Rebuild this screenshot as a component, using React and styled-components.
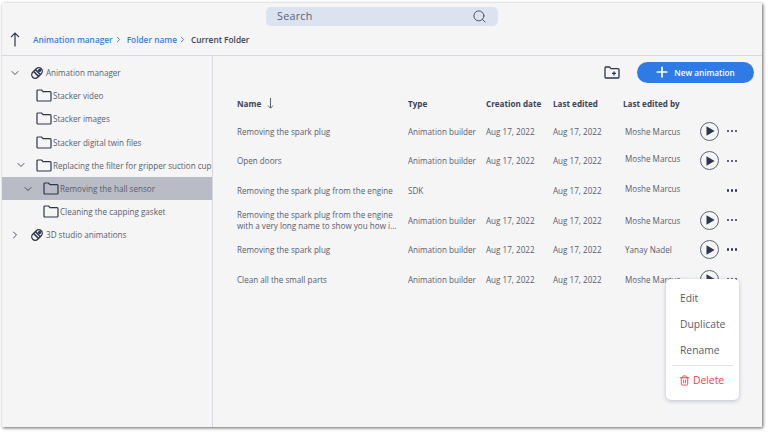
import React from 'react';
import styled, { createGlobalStyle } from 'styled-components';
import { Search as SearchIcon, ChevronDown, ChevronRight, Plus, Trash2 } from 'lucide-react';

const GlobalStyle = createGlobalStyle`
  html, body { margin: 0; padding: 0; background: #fff; }
  body { width: 768px; height: 432px; overflow: hidden; font-family: "Open Sans", "Noto Sans", sans-serif; }
  * { box-sizing: border-box; }
`;

const Page = styled.div`
  width: 768px;
  height: 432px;
  padding: 3px 6px 5px 2px;
`;

const Frame = styled.div`
  position: relative;
  width: 760px;
  height: 424px;
  display: flex;
  flex-direction: column;
  background: #f5f5f5;
  box-shadow: 1px 1px 3px rgba(60, 60, 60, 0.8);
`;

const Header = styled.header`
  height: 53px;
  flex: none;
  display: flex;
  flex-direction: column;
  border-bottom: 1px solid #d6d9e2;
  padding-top: 4px;
`;

const SearchBar = styled.div`
  width: 232px;
  height: 19px;
  margin-left: 264px;
  padding: 0 11px;
  display: flex;
  align-items: center;
  justify-content: space-between;
  background: #dbe2f0;
  border-radius: 5px;
  font-size: 10.7px;
  line-height: 17px;
  letter-spacing: 0.3px;
  color: #5a6278;
`;

const Crumbs = styled.nav`
  margin-top: 4px;
  height: 18px;
  padding-left: 8px;
  display: flex;
  align-items: center;
  font-size: 8.3px;
  font-weight: 600;
  color: #3a4256;
  svg { flex: none; }
`;

const CrumbLink = styled.span`
  color: #2f7fe8;
  display: flex;
  align-items: center;
  gap: 1px;
  margin-right: 4px;
`;

const CrumbList = styled.div`
  margin-left: 13px;
  display: flex;
  align-items: center;
`;

const Body = styled.div`
  flex: 1;
  display: flex;
  min-height: 0;
`;

const Sidebar = styled.aside`
  width: 211px;
  flex: none;
  padding-top: 5px;
  border-right: 1px solid #d6d9e2;
  overflow: hidden;
`;

const TreeRow = styled.div`
  height: 23.2px;
  display: flex;
  align-items: center;
  padding-left: ${(p) => p.$indent}px;
  background: ${(p) => (p.$active ? '#b9bcc5' : 'transparent')};
  font-size: 8.1px;
  white-space: nowrap;
  color: #565d70;
`;

const Toggle = styled.span`
  width: 12px;
  margin-right: 9px;
  flex: none;
  display: flex;
  align-items: center;
  justify-content: center;
  color: #2d3650;
`;

const TreeLabel = styled.span`
  margin-left: ${(p) => p.$gap}px;
`;

const Main = styled.main`
  flex: 1;
  min-width: 0;
  padding: 5px 8px 0 24px;
`;

const Toolbar = styled.div`
  height: 22px;
  display: flex;
  justify-content: flex-end;
  align-items: center;
  gap: 17px;
`;

const NewButton = styled.button`
  width: 117px;
  height: 21px;
  display: flex;
  align-items: center;
  justify-content: center;
  gap: 4px;
  border: 0;
  border-radius: 11px;
  background: #2f7be6;
  color: #fff;
  font-family: inherit;
  font-size: 8.2px;
  font-weight: 600;
  padding: 0 2px 0 0;
`;

const TableHead = styled.div`
  display: grid;
  grid-template-columns: 171px 78px 67px 70px 1fr;
  align-items: center;
  height: 24px;
  margin-top: 8px;
  font-size: 8.1px;
  font-weight: 700;
  color: #3b4358;
`;

const HeadCell = styled.span`
  display: flex;
  align-items: center;
  gap: 6px;
`;

const Rows = styled.div`
  margin-top: 1.5px;
`;

const Row = styled.div`
  display: grid;
  grid-template-columns: 171px 78px 67px 72px 75px 22px 20px;
  align-items: center;
  height: 29.6px;
  font-size: 8.1px;
  color: #565d70;
  white-space: nowrap;
`;

const NameCell = styled.span`
  line-height: 11.2px;
`;

const ByCell = styled.span`
  transform: translateY(${(p) => p.$shift}px);
`;

const PlayBtn = styled.span`
  width: 19px;
  height: 19px;
  border: 1.2px solid #5c6478;
  border-radius: 50%;
  display: flex;
  align-items: center;
  justify-content: center;
`;

const Dots = styled.span`
  display: flex;
  gap: 1.7px;
  justify-content: center;
  i {
    width: 2.4px;
    height: 2.4px;
    border-radius: 50%;
    background: #2d3650;
  }
`;

const Menu = styled.div`
  position: absolute;
  left: 664px;
  top: 276px;
  width: 73px;
  height: 121px;
  padding: 6px 6px 0;
  background: #fff;
  border-radius: 5px;
  box-shadow: 0 1px 4px rgba(110, 125, 170, 0.45);
  font-size: 10.3px;
  color: #565d70;
`;

const MenuItem = styled.div`
  height: 26px;
  padding-left: 8px;
  display: flex;
  align-items: center;
`;

const MenuDivider = styled.div`
  height: 1px;
  margin-top: 2px;
  background: #e2e4ea;
`;

const DeleteItem = styled(MenuItem)`
  margin-top: 1px;
  padding-left: 7px;
  gap: 3px;
  color: #fb3c48;
`;

const FolderIcon = () => (
  <svg width="16" height="13" viewBox="0 0 16 13" fill="none" stroke="#2d3650" strokeWidth="1.2" strokeLinejoin="round" style={{ flex: 'none' }}>
    <path d="M1 11V2q0-1 1-1h3.5l1.5 1.6h7q1 0 1 1V11q0 1-1 1H2q-1 0-1-1z" />
  </svg>
);

const RollIcon = () => (
  <svg width="14" height="14" viewBox="0 0 14 14" fill="none" stroke="#2d3650" strokeWidth="1.3" style={{ flex: 'none' }}>
    <rect x="1" y="3.5" width="12" height="7" rx="3.5" transform="rotate(-45 7 7)" />
    <path d="M3.4 5.2l5.4 5.4M5.2 3.4l5.4 5.4" strokeWidth="1.6" />
    <circle cx="9.6" cy="4.4" r="1.6" fill="#2d3650" stroke="none" />
  </svg>
);

const NewFolderIcon = () => (
  <svg width="16" height="13" viewBox="0 0 16 13" fill="none" stroke="#2d3650" strokeWidth="1.3" strokeLinejoin="round">
    <path d="M1 11V2q0-1 1-1h3.5l1.5 1.6h7q1 0 1 1V11q0 1-1 1H2q-1 0-1-1z" />
    <path d="M8 7.4h4M10 5.4v4" />
  </svg>
);

const PlayIcon = () => (
  <svg width="9" height="10" viewBox="0 0 9 10" style={{ marginLeft: 2 }}>
    <path d="M0.5 0.3L8.6 5L0.5 9.7z" fill="#2d3650" />
  </svg>
);

const UpArrow = () => (
  <svg width="10" height="15" viewBox="0 0 10 15" fill="none" stroke="#2d3650" strokeWidth="1.2">
    <path d="M5 14.5V1M1 5.2L5 1l4 4.2" />
  </svg>
);

const SortArrow = () => (
  <svg width="7" height="11" viewBox="0 0 7 11" fill="none" stroke="#4a5268" strokeWidth="0.9">
    <path d="M3.5 0v10M1 7.6l2.5 2.6L6 7.6" />
  </svg>
);

const tree = [
  { indent: 7, open: true, icon: 'roll', label: 'Animation manager' },
  { indent: 13, icon: 'folder', label: 'Stacker video' },
  { indent: 13, icon: 'folder', label: 'Stacker images' },
  { indent: 13, icon: 'folder', label: 'Stacker digital twin files' },
  { indent: 13, open: true, icon: 'folder', label: 'Replacing the filter for gripper suction cup' },
  { indent: 20, open: true, icon: 'folder', label: 'Removing the hall sensor', active: true },
  { indent: 20, icon: 'folder', label: 'Cleaning the capping gasket' },
  { indent: 7, closed: true, icon: 'roll', label: '3D studio animations' },
];

const rows = [
  { name: 'Removing the spark plug', type: 'Animation builder', created: 'Aug 17, 2022', by: 'Moshe Marcus', shift: 0, play: true },
  { name: 'Open doors', type: 'Animation builder', created: 'Aug 17, 2022', by: 'Moshe Marcus', shift: -2, play: true },
  { name: 'Removing the spark plug from the engine', type: 'SDK', created: '', by: 'Moshe Marcus', shift: -2 },
  { name: <>Removing the spark plug from the engine<br />with a very long name to show you how i...</>, type: 'Animation builder', created: 'Aug 17, 2022', by: 'Moshe Marcus', shift: 0, play: true },
  { name: 'Removing the spark plug', type: 'Animation builder', created: 'Aug 17, 2022', by: 'Yanay Nadel', shift: 0, play: true },
  { name: 'Clean all the small parts', type: 'Animation builder', created: 'Aug 17, 2022', by: 'Moshe Marcus', shift: 0, play: true },
];

export default function App() {
  return (
    <Page>
      <GlobalStyle />
      <Frame>
        <Header>
          <SearchBar>
            Search
            <SearchIcon size={15} strokeWidth={1.4} color="#3a4256" />
          </SearchBar>
          <Crumbs>
            <UpArrow />
            <CrumbList>
              <CrumbLink>Animation manager<ChevronRight size={9} strokeWidth={2.6} /></CrumbLink>
              <CrumbLink>Folder name<ChevronRight size={9} strokeWidth={2.6} /></CrumbLink>
              Current Folder
            </CrumbList>
          </Crumbs>
        </Header>
        <Body>
          <Sidebar>
            {tree.map((item) => (
              <TreeRow key={item.label} $indent={item.indent} $active={item.active}>
                <Toggle>
                  {item.open && <ChevronDown size={14} strokeWidth={1.7} />}
                  {item.closed && <ChevronRight size={14} strokeWidth={1.7} />}
                </Toggle>
                {item.icon === 'roll' ? <RollIcon /> : <FolderIcon />}
                <TreeLabel $gap={item.icon === 'roll' ? 2 : 1}>{item.label}</TreeLabel>
              </TreeRow>
            ))}
          </Sidebar>
          <Main>
            <Toolbar>
              <NewFolderIcon />
              <NewButton><Plus size={16} strokeWidth={2.6} />New animation</NewButton>
            </Toolbar>
            <TableHead>
              <HeadCell>Name <SortArrow /></HeadCell>
              <HeadCell>Type</HeadCell>
              <HeadCell>Creation date</HeadCell>
              <HeadCell>Last edited</HeadCell>
              <HeadCell>Last edited by</HeadCell>
            </TableHead>
            <Rows>
              {rows.map((row, i) => (
                <Row key={i}>
                  <NameCell>{row.name}</NameCell>
                  <span>{row.type}</span>
                  <span>{row.created}</span>
                  <span>Aug 17, 2022</span>
                  <ByCell $shift={row.shift}>{row.by}</ByCell>
                  {row.play ? <PlayBtn><PlayIcon /></PlayBtn> : <span />}
                  <Dots><i /><i /><i /></Dots>
                </Row>
              ))}
            </Rows>
          </Main>
        </Body>
        <Menu>
          <MenuItem>Edit</MenuItem>
          <MenuItem>Duplicate</MenuItem>
          <MenuItem>Rename</MenuItem>
          <MenuDivider />
          <DeleteItem><Trash2 size={11} strokeWidth={2} />Delete</DeleteItem>
        </Menu>
      </Frame>
    </Page>
  );
}
